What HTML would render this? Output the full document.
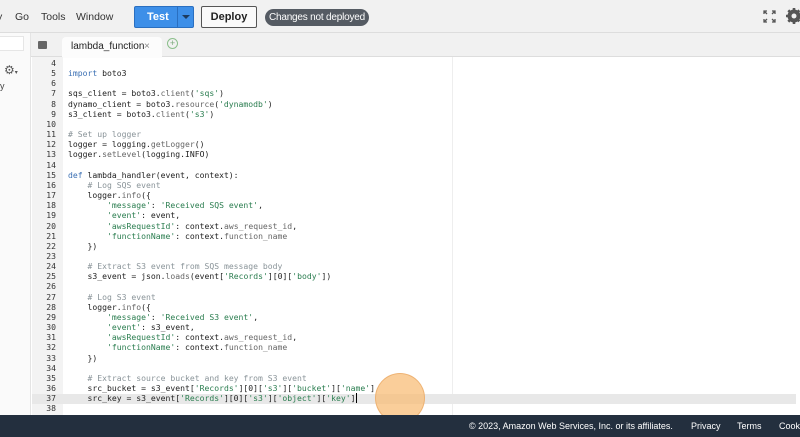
<!DOCTYPE html>
<html><head><style>
*{margin:0;padding:0;box-sizing:border-box}
html,body{overflow:hidden}
body{width:800px;height:437px;background:#fff;font-family:"Liberation Sans",sans-serif;position:relative}
.top{position:absolute;left:0;top:0;width:800px;height:33px;background:#f1f1f1;border-bottom:1px solid #ddd;overflow:hidden}
.menu{position:absolute;top:11px;font-size:10.5px;color:#333}
.test{position:absolute;left:134px;top:6px;width:60px;height:22px;background:#3d8fe8;border:1px solid #2a6fc0;border-radius:2px}
.test span{position:absolute;left:12px;top:4px;font-size:11px;font-weight:bold;color:#fff}
.test i{position:absolute;left:42px;top:0;width:1px;height:20px;background:#2a6fc0}
.test b{position:absolute;left:47px;top:8px;border-left:4px solid transparent;border-right:4px solid transparent;border-top:4px solid #1d3b5e}
.deploy{position:absolute;left:201px;top:6px;width:56px;height:22px;border:1px solid #555;background:#fafafa;border-radius:2px;font-size:11px;font-weight:bold;color:#222;text-align:center;line-height:20px}
.pill{position:absolute;left:265px;top:9px;width:104px;height:17px;background:#555b63;border-radius:9px;color:#fff;font-size:10px;text-align:center;line-height:17px;white-space:nowrap;letter-spacing:-0.2px}
.left{position:absolute;left:0;top:33px;width:31px;height:382px;background:#fafafa;border-right:1px solid #e4e4e4;overflow:hidden}
.tabbar{position:absolute;left:31px;top:33px;width:769px;height:24px;background:#f1f1f1;border-bottom:1px solid #ddd}
.tab{position:absolute;left:62px;top:37px;width:100px;height:21px;background:#fcfcfc;border-radius:4px 4px 0 0}
.gutter{position:absolute;left:32px;top:57px;width:31px;height:358px;background:#f3f3f3}
.code{position:absolute;top:58px;font-family:"DejaVu Sans Mono",monospace;font-size:8.1px;line-height:10.15px;white-space:pre;color:#222}
.ln{left:32px;width:24px;text-align:right;color:#333}
.src{left:68px}
.k{color:#3a6fb3}.s{color:#2a7d4f}.c{color:#8a9499}.f{color:#666}
.footer{position:absolute;left:0;top:415px;width:800px;height:22px;background:#232f3e;color:#fff;font-size:9px;white-space:nowrap;overflow:hidden}
.footer span{position:absolute;top:6px}
</style></head><body>
<div class="top">
<span class="menu" style="left:-3px">y</span>
<span class="menu" style="left:15px">Go</span>
<span class="menu" style="left:41px">Tools</span>
<span class="menu" style="left:76px">Window</span>
<div class="test"><span>Test</span><i></i><b></b></div>
<div class="deploy">Deploy</div>
<div class="pill">Changes not deployed</div>
<svg style="position:absolute;left:763px;top:10px" width="13" height="13" viewBox="0 0 13 13" fill="none" stroke="#555" stroke-width="1.3"><path d="M1 4V1h3M1 1l3 3M12 4V1H9M12 1L9 4M1 9v3h3M1 12l3-3M12 9v3H9M12 12L9 9"/></svg>
<svg style="position:absolute;left:786px;top:8px" width="14" height="16" viewBox="0 0 14 16"><circle cx="8" cy="8" r="5" fill="none" stroke="#555" stroke-width="3"/><g stroke="#555" stroke-width="2.6"><path d="M8 0v16M0 8h14M2.3 2.3l11 11M13.3 2.3L2.3 13.7"/></g><circle cx="8" cy="8" r="2.5" fill="#f1f1f1"/></svg>
</div>
<div class="left">
<div style="position:absolute;left:0;top:3px;width:24px;height:15px;background:#fff;border:1px solid #e6e6e6;border-left:none"></div>
<span style="position:absolute;left:4px;top:30px;font-size:12px;color:#555">⚙<small style="font-size:6px">▾</small></span>
<span style="position:absolute;left:0px;top:48px;font-size:9px;color:#444">y</span>
</div>
<div class="tabbar"></div>
<div style="position:absolute;left:38px;top:41px;width:9px;height:8px;background:#666;border-radius:1px"></div>
<div class="tab"></div>
<span style="position:absolute;left:71px;top:41px;font-size:10px;color:#222">lambda_function</span>
<span style="position:absolute;left:144px;top:41px;font-size:10px;color:#888">×</span>
<div style="position:absolute;left:167px;top:38px;width:11px;height:11px;border:1px solid #8bbf8b;border-radius:50%;color:#7aa97a;font-size:9px;line-height:9px;text-align:center">+</div>
<div class="gutter"></div>
<div style="position:absolute;left:452px;top:57px;width:1px;height:358px;background:#eee"></div>
<div style="position:absolute;left:32px;top:394px;width:764px;height:10px;background:#e8e8e8"></div>
<div class="code ln">4
5
6
7
8
9
10
11
12
13
14
15
16
17
18
19
20
21
22
23
24
25
26
27
28
29
30
31
32
33
34
35
36
37
38</div>
<div class="code src">
<span class="k">import</span> boto3

sqs_client = boto3.<span class="f">client</span>(<span class="s">'sqs'</span>)
dynamo_client = boto3.<span class="f">resource</span>(<span class="s">'dynamodb'</span>)
s3_client = boto3.<span class="f">client</span>(<span class="s">'s3'</span>)

<span class="c"># Set up logger</span>
logger = logging.<span class="f">getLogger</span>()
logger.<span class="f">setLevel</span>(logging.INFO)

<span class="k">def</span> lambda_handler(event, context):
    <span class="c"># Log SQS event</span>
    logger.<span class="f">info</span>({
        <span class="s">'message'</span>: <span class="s">'Received SQS event'</span>,
        <span class="s">'event'</span>: event,
        <span class="s">'awsRequestId'</span>: context.<span class="f">aws_request_id</span>,
        <span class="s">'functionName'</span>: context.<span class="f">function_name</span>
    })

    <span class="c"># Extract S3 event from SQS message body</span>
    s3_event = json.<span class="f">loads</span>(event[<span class="s">'Records'</span>][0][<span class="s">'body'</span>])

    <span class="c"># Log S3 event</span>
    logger.<span class="f">info</span>({
        <span class="s">'message'</span>: <span class="s">'Received S3 event'</span>,
        <span class="s">'event'</span>: s3_event,
        <span class="s">'awsRequestId'</span>: context.<span class="f">aws_request_id</span>,
        <span class="s">'functionName'</span>: context.<span class="f">function_name</span>
    })

    <span class="c"># Extract source bucket and key from S3 event</span>
    src_bucket = s3_event[<span class="s">'Records'</span>][0][<span class="s">'s3'</span>][<span class="s">'bucket'</span>][<span class="s">'name'</span>]
    src_key = s3_event[<span class="s">'Records'</span>][0][<span class="s">'s3'</span>][<span class="s">'object'</span>][<span class="s">'key'</span>]<span style="border-left:1px solid #000"></span>
</div>
<div style="position:absolute;left:375px;top:373px;width:50px;height:50px;border-radius:50%;background:rgba(248,190,120,0.75);border:1px solid rgba(230,160,90,0.6)"></div>
<div class="footer">
<span style="left:469px">© 2023, Amazon Web Services, Inc. or its affiliates.</span>
<span style="left:691px">Privacy</span>
<span style="left:737px">Terms</span>
<span style="left:779px">Cookie preferences</span>
</div>
</body></html>
